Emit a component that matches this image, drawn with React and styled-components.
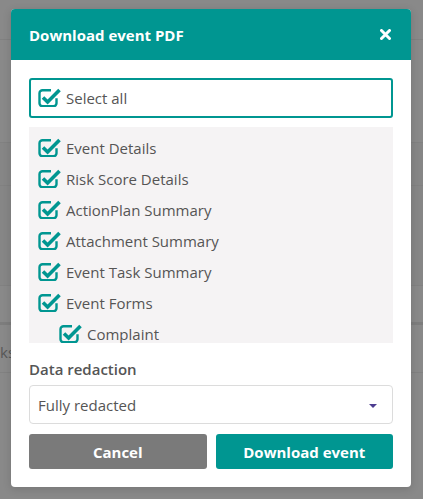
import React from 'react';
import styled, { createGlobalStyle } from 'styled-components';

const teal = '#009691';

const Global = createGlobalStyle`
  html, body {
    margin: 0;
    padding: 0;
    background: #898989;
    font-family: "Open Sans", "Liberation Sans", sans-serif;
  }
`;

const Backdrop = styled.div`
  width: 423px;
  height: 499px;
  overflow: hidden;
  display: flex;
  flex-direction: column;
`;

const BgRow = styled.div`
  height: ${p => p.h}px;
  flex: none;
  border-bottom: ${p => p.line || 1}px solid ${p => (p.line > 1 ? '#7d7d7d' : '#818181')};
  background: ${p => p.shade || 'transparent'};
  display: flex;
  align-items: flex-end;
  font-size: 15px;
  color: #575757;
  box-sizing: border-box;
`;

const Modal = styled.div`
  position: absolute;
  left: 11px;
  top: 9px;
  width: 400px;
  background: #fff;
  border-radius: 4px;
  overflow: hidden;
  box-shadow: 0 2px 8px rgba(0, 0, 0, 0.15);
`;

const Header = styled.div`
  height: 51px;
  background: ${teal};
  display: flex;
  align-items: center;
  justify-content: space-between;
  padding: 0 20px 0 18px;
  color: #fff;
  font-weight: 700;
  font-size: 15px;
`;

const Body = styled.div`
  padding: 18px 18px 18px;
  display: flex;
  flex-direction: column;
`;

const SelectAll = styled.div`
  height: 40px;
  box-sizing: border-box;
  border: 2.5px solid ${teal};
  border-radius: 3px;
  display: flex;
  align-items: center;
  padding-left: 7px;
  gap: 4px;
  font-size: 15px;
  color: #555;
  margin-bottom: 9px;
`;

const List = styled.div`
  height: 216px;
  background: #f5f3f4;
  overflow: hidden;
  padding-top: 5px;
  box-sizing: border-box;
`;

const Item = styled.div`
  height: 31px;
  display: flex;
  align-items: center;
  gap: 4px;
  padding-left: ${p => (p.indent ? 30 : 9)}px;
  font-size: 15px;
  color: #555;
`;

const Box = styled.svg`
  flex: none;
  width: 24px;
  height: 24px;
  margin-top: -6px;
`;

const Label = styled.div`
  margin-top: 16px;
  font-size: 15px;
  font-weight: 600;
  color: #555;
  line-height: 21px;
`;

const Select = styled.div`
  margin-top: 5px;
  height: 39px;
  box-sizing: border-box;
  border: 1px solid #dcdcdc;
  border-radius: 4px;
  display: flex;
  align-items: center;
  justify-content: space-between;
  padding: 0 15px 0 8px;
  font-size: 15px;
  color: #555;
`;

const Caret = styled.span`
  width: 0;
  height: 0;
  border-left: 4px solid transparent;
  border-right: 4px solid transparent;
  border-top: 4px solid #4d3d90;
  margin-top: 2px;
`;

const Actions = styled.div`
  margin-top: 10px;
  display: grid;
  grid-template-columns: 1fr 1fr;
  gap: 9px;
`;

const Button = styled.button`
  height: 35px;
  border: none;
  border-radius: 3px;
  background: ${p => (p.primary ? teal : '#7a7a7a')};
  color: #fff;
  font-family: inherit;
  font-size: 15px;
  font-weight: 700;
`;

function CheckIcon() {
  return (
    <Box viewBox="0 0 24 24">
      <path
        d="M13 7.25 H4.5 a3 3 0 0 0 -3 3 v10 a3 3 0 0 0 3 3 h11 a3 3 0 0 0 3 -3 v-5"
        fill="none"
        stroke={teal}
        strokeWidth="2.4"
      />
      <path d="M5 14.5 L9.6 19 L21.5 7" fill="none" stroke={teal} strokeWidth="3.6" strokeLinejoin="miter" />
    </Box>
  );
}

function CloseIcon() {
  return (
    <svg width="11" height="11" viewBox="0 0 11 11">
      <path d="M1.5 1.5 L9.5 9.5 M9.5 1.5 L1.5 9.5" stroke="#fff" strokeWidth="3" strokeLinecap="round" />
    </svg>
  );
}

const items = [
  { label: 'Event Details' },
  { label: 'Risk Score Details' },
  { label: 'ActionPlan Summary' },
  { label: 'Attachment Summary' },
  { label: 'Event Task Summary' },
  { label: 'Event Forms' },
  { label: 'Complaint', indent: true },
  { label: 'Incident', indent: true },
];

export default function App() {
  return (
    <>
      <Global />
      <Backdrop>
        <BgRow h={40} />
        <BgRow h={103} />
        <BgRow h={43} shade="#868686" />
        <BgRow h={100} shade="#868686" />
        <BgRow h={39} line={3} />
        <BgRow h={48}>
          <span style={{ marginBottom: 10 }}>ks</span>
        </BgRow>
      </Backdrop>
      <Modal>
        <Header>
          <span>Download event PDF</span>
          <CloseIcon />
        </Header>
        <Body>
          <SelectAll>
            <CheckIcon />
            <span>Select all</span>
          </SelectAll>
          <List>
            {items.map(it => (
              <Item key={it.label} indent={it.indent}>
                <CheckIcon />
                <span>{it.label}</span>
              </Item>
            ))}
          </List>
          <Label>Data redaction</Label>
          <Select>
            <span>Fully redacted</span>
            <Caret />
          </Select>
          <Actions>
            <Button>Cancel</Button>
            <Button primary>Download event</Button>
          </Actions>
        </Body>
      </Modal>
    </>
  );
}
